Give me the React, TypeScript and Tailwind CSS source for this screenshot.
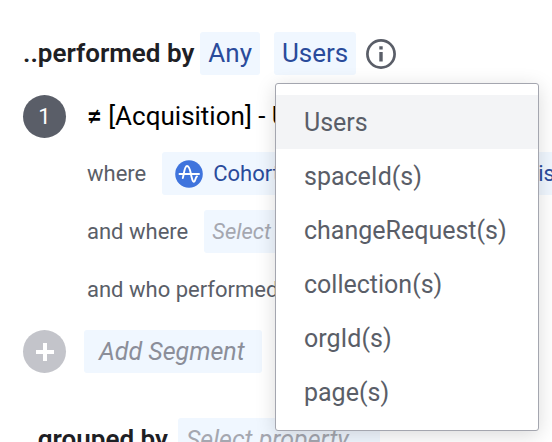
import type { ReactNode } from "react";

const options = ["Users", "spaceId(s)", "changeRequest(s)", "collection(s)", "orgId(s)", "page(s)"];

function Chip({ className = "", children }: { className?: string; children: ReactNode }) {
  return (
    <button type="button" className={`flex h-[43px] shrink-0 items-center rounded-[3px] bg-[#f0f7ff] ${className}`}>
      {children}
    </button>
  );
}

function AmplitudeIcon() {
  return (
    <svg viewBox="0 0 28 28" className="size-7 shrink-0" fill="none" aria-hidden="true">
      <circle cx="14" cy="14" r="13.8" fill="#3f74dd" />
      <path
        d="M4.500 14h19.500M7.800 18C8.800 15 9.400 6 12 6c3 0 3.600 7 4.600 11 .6 2.600 1.200 4.800 2.400 4.800 1.400 0 1.200-4.400 3-5.400"
        stroke="#fff"
        strokeWidth="1.900"
        strokeLinecap="round"
      />
    </svg>
  );
}

function InfoIcon() {
  return (
    <svg viewBox="0 0 30 30" className="size-[30px]" fill="none" aria-hidden="true">
      <circle cx="15" cy="15" r="13.600" stroke="#5a5e68" strokeWidth="2.700" />
      <path d="M13.300 7.300h3.400v3.200h-3.400zM13.300 13h3.400v9.500h-3.400z" fill="#5a5e68" />
    </svg>
  );
}

function EntityMenu() {
  return (
    <ul
      role="listbox"
      aria-label="Performed by"
      className="absolute top-full left-px z-10 mt-2 w-[264px] rounded-[3px] border border-[#a4a6af] bg-white py-[11px] text-[25px] text-[#5a5e68] shadow-[0_4px_20px_rgba(0,0,0,0.15)]"
    >
      {options.map((option, index) => (
        <li key={option} role="option" aria-selected={index === 0}>
          <button
            type="button"
            className={`flex h-[54px] w-full items-center pt-0.5 pl-7 ${index === 0 ? "bg-[#f3f4f6]" : ""}`}
          >
            {option}
          </button>
        </li>
      ))}
    </ul>
  );
}

export default function App() {
  return (
    <main className="h-screen overflow-hidden bg-white pt-8 pl-[23px] font-['Roboto',sans-serif] text-[25px] whitespace-nowrap text-[#5a5e68]">
      <div className="flex h-[43px] items-center text-[26px]">
        <h2 className="mr-1.5 font-semibold text-[#1e2024]">..performed by</h2>
        <Chip className="mr-[14px] px-2 text-[#2a4b9b]">Any</Chip>
        <div className="relative">
          <Chip className="px-2 text-[#2a4b9b]">Users</Chip>
          <EntityMenu />
        </div>
        <button type="button" aria-label="More information" className="ml-[10px]">
          <InfoIcon />
        </button>
      </div>

      <div className="mt-5 flex h-[43px] items-center">
        <span className="flex size-[43px] shrink-0 items-center justify-center rounded-full bg-[#5a5e68] text-[22px] text-white">
          1
        </span>
        <button type="button" className="ml-[21px] text-[26px] text-black">
          <span className="font-semibold">≠</span> [Acquisition] - User
        </button>
      </div>

      <div className="mt-[14px] flex flex-col gap-[15px] pl-16 text-[22px]">
        <div className="flex items-center gap-4">
          <span>where</span>
          <div className="flex">
            <Chip className="w-[368px] gap-[10px] px-[13px] text-[#2a4b9b]">
              <AmplitudeIcon />
              Cohort
            </Chip>
            <Chip className="pr-4 pl-2 text-[#2a4b9b]">is</Chip>
          </div>
        </div>
        <div className="flex items-center gap-4">
          <span>and where</span>
          <Chip className="px-2 text-[#a5a7b0] italic">Select property...</Chip>
        </div>
        <div className="flex h-[43px] items-center">and who performed</div>
      </div>

      <div className="mt-[19px] flex items-center gap-[18px]">
        <button
          type="button"
          aria-label="Add segment"
          className="flex size-[43px] shrink-0 items-center justify-center rounded-full bg-[#c3c4ca]"
        >
          <svg viewBox="0 0 18 18" className="size-[18px]" aria-hidden="true">
            <path d="M9 0v18M0 9h18" stroke="#fff" strokeWidth="4" />
          </svg>
        </button>
        <Chip className="w-[178px] px-[15px] text-[#8b8e99] italic">Add Segment</Chip>
      </div>

      <div className="mt-[45px] flex items-center gap-[10px]">
        <h2 className="text-[26px] font-semibold text-[#1e2024]">..grouped by</h2>
        <Chip className="w-[202px] px-2 text-[#a5a7b0] italic">Select property...</Chip>
      </div>
    </main>
  );
}
